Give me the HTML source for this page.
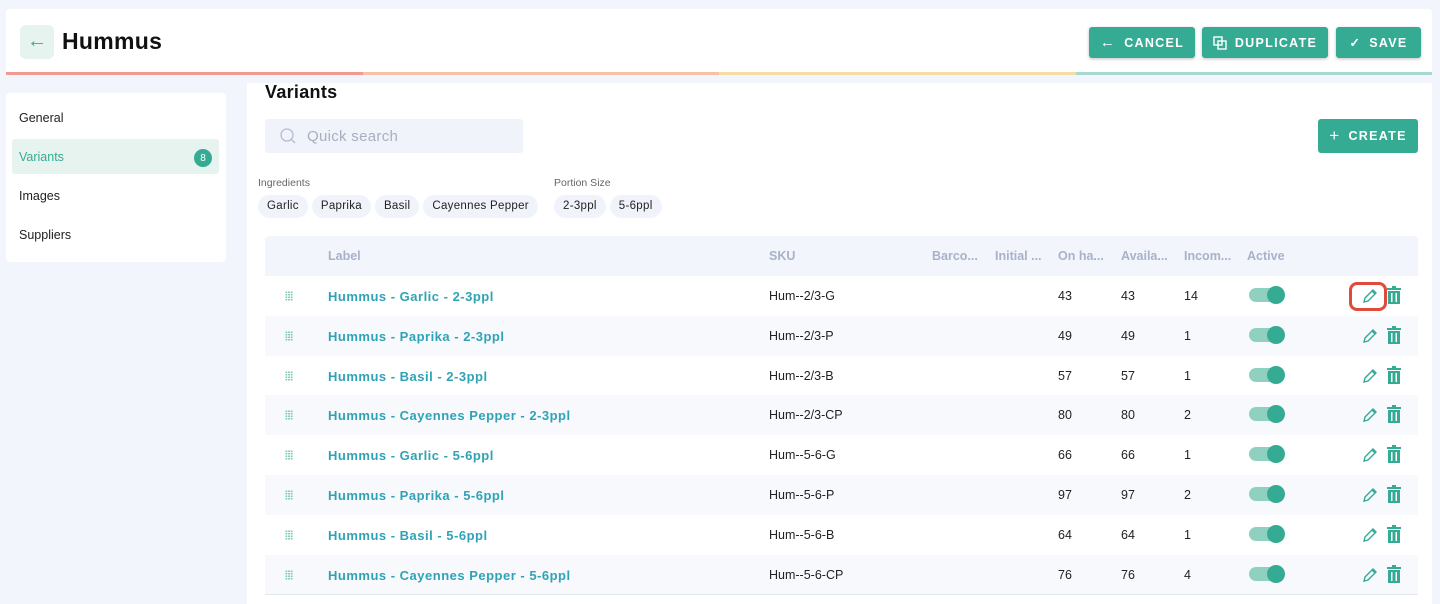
<!DOCTYPE html>
<html><head><style>
*{box-sizing:border-box;margin:0;padding:0}
body{width:1440px;height:604px;overflow:hidden;background:#f2f5fc;font-family:"Liberation Sans",sans-serif;color:#222;position:relative}
.abs{position:absolute}
.hdr{left:6px;top:9px;width:1426px;height:66px;background:#fff;border-radius:4px 4px 0 0}
.grad{left:6px;top:72px;width:1426px;height:3px;display:flex}
.grad div{flex:1}
.back{left:20px;top:25px;width:34px;height:34px;background:#e6f3ef;border-radius:6px;color:#35a993;font-size:20px;text-align:center;line-height:32px}
.title{left:62px;top:28px;font-size:23px;font-weight:bold;color:#111;letter-spacing:.3px}
.btn{top:27px;height:31px;background:#36ab94;color:#fff;font-weight:bold;font-size:12.5px;letter-spacing:1.3px;border-radius:3px;box-shadow:0 1px 3px rgba(0,0,0,.25);display:flex;align-items:center;justify-content:center;gap:8px}
.side{left:6px;top:93px;width:220px;height:169px;background:#fff;border-radius:4px}
.si{position:absolute;left:13px;font-size:12.5px;color:#222}
.main{left:247px;top:83px;width:1185px;height:521px;background:#fff}
.chip{display:inline-block;background:#f0f3fa;border-radius:12px;padding:0 9px;height:23px;line-height:23px;font-size:11.5px;margin-right:4px;color:#222;letter-spacing:.3px}
.row{position:absolute;left:265px;width:1153px;height:40px;font-size:12.5px}
.row span{position:absolute;top:13px}
.lbl{left:63px;color:#2fa3b5;font-weight:bold;font-size:13px;letter-spacing:.5px}
.drag{left:20px;top:15px!important;width:8px;height:10px;background-image:radial-gradient(#7cc8b4 45%,transparent 50%);background-size:2.7px 2.5px}
.tog{position:absolute;left:984px;top:12px;width:34px;height:14px;background:#8fd0c1;border-radius:7px}
.tog:after{content:"";position:absolute;right:-2px;top:-2px;width:18px;height:18px;border-radius:50%;background:#36ab94}
</style></head><body>
<div class="abs hdr"></div>
<div class="abs grad"><div style="background:#f19a92"></div><div style="background:#f6c2a6"></div><div style="background:#f4dda6"></div><div style="background:#a8d9cf"></div></div>
<div class="abs back">&#8592;</div>
<div class="abs title">Hummus</div>
<div class="abs btn" style="left:1089px;width:106px"><span style="font-size:15px">&#8592;</span>CANCEL</div>
<div class="abs btn" style="left:1202px;width:126px"><svg width="14" height="14" viewBox="0 0 14 14" fill="none" stroke="#fff" stroke-width="1.4"><rect x="1" y="1" width="8" height="8"/><rect x="5" y="5" width="8" height="8"/></svg>DUPLICATE</div>
<div class="abs btn" style="left:1336px;width:85px"><span>&#10003;</span>SAVE</div>
<div class="abs side">
<div class="si" style="top:18px">General</div>
<div style="position:absolute;left:6px;top:46px;width:207px;height:35px;background:#e6f3ef;border-radius:3px"></div>
<div class="si" style="top:57px;color:#36ab94">Variants</div>
<div style="position:absolute;left:188px;top:56px;width:18px;height:18px;border-radius:50%;background:#36ab94;color:#fff;font-size:10px;text-align:center;line-height:19px">8</div>
<div class="si" style="top:96px">Images</div>
<div class="si" style="top:135px">Suppliers</div>
</div>
<div class="abs main"></div>
<div class="abs" style="left:265px;top:82px;font-size:18px;font-weight:bold;color:#111;letter-spacing:.3px">Variants</div>
<div class="abs" style="left:265px;top:119px;width:258px;height:34px;background:#f0f3fa;border-radius:3px"></div>
<svg class="abs" style="left:279px;top:127px" width="18" height="18" viewBox="0 0 18 18" fill="none" stroke="#b4bdd0" stroke-width="1.3"><circle cx="8" cy="8" r="6"/><path d="M12.5 12.5L16 16"/></svg>
<div class="abs" style="left:307px;top:128px;font-size:15px;color:#a7afc0;letter-spacing:.3px">Quick search</div>
<div class="abs btn" style="left:1318px;top:119px;width:100px;height:34px;box-shadow:none"><span style="font-size:17px;font-weight:normal">+</span>CREATE</div>
<div class="abs" style="left:258px;top:177px;font-size:10.5px;color:#666">Ingredients</div>
<div class="abs" style="left:554px;top:177px;font-size:10.5px;color:#666">Portion Size</div>
<div class="abs" style="left:258px;top:195px"><span class="chip">Garlic</span><span class="chip">Paprika</span><span class="chip">Basil</span><span class="chip">Cayennes Pepper</span></div>
<div class="abs" style="left:554px;top:195px"><span class="chip">2-3ppl</span><span class="chip">5-6ppl</span></div>
<div class="row" style="top:236px;background:#f2f5fc;border-radius:4px 4px 0 0;color:#a8b2c8;font-weight:bold">
<span style="left:63px">Label</span><span style="left:504px">SKU</span><span style="left:667px">Barco...</span><span style="left:730px">Initial ...</span><span style="left:793px">On ha...</span><span style="left:856px">Availa...</span><span style="left:919px">Incom...</span><span style="left:982px">Active</span></div>
<div id="rows"></div>
<div class="abs" style="left:265px;top:594px;width:1153px;height:1px;background:#e3e8f0"></div>
<div class="abs" style="left:1349px;top:282px;width:38px;height:29px;border:3px solid #e04a3a;border-radius:8px"></div>
<script>
var d=[["Hummus - Garlic - 2-3ppl","Hum--2/3-G",43,43,14],["Hummus - Paprika - 2-3ppl","Hum--2/3-P",49,49,1],["Hummus - Basil - 2-3ppl","Hum--2/3-B",57,57,1],["Hummus - Cayennes Pepper - 2-3ppl","Hum--2/3-CP",80,80,2],["Hummus - Garlic - 5-6ppl","Hum--5-6-G",66,66,1],["Hummus - Paprika - 5-6ppl","Hum--5-6-P",97,97,2],["Hummus - Basil - 5-6ppl","Hum--5-6-B",64,64,1],["Hummus - Cayennes Pepper - 5-6ppl","Hum--5-6-CP",76,76,4]];
var h="";d.forEach(function(r,i){h+='<div class="row" style="top:'+(276+i*39.8)+'px;background:'+(i%2?'#f7f9fd':'#fff')+'"><span class="drag"></span><span class="lbl">'+r[0]+'</span><span style="left:504px">'+r[1]+'</span><span style="left:793px">'+r[2]+'</span><span style="left:856px">'+r[3]+'</span><span style="left:919px">'+r[4]+'</span><div class="tog"></div>'+
'<svg style="position:absolute;left:1096px;top:11px" width="18" height="18" viewBox="0 0 18 18" fill="none" stroke="#36ab94" stroke-width="1.4"><path d="M3 15l1-4 8-8 3 3-8 8z M11 4l3 3"/></svg>'+
'<svg style="position:absolute;left:1121px;top:10px" width="16" height="19" viewBox="0 0 16 19" fill="#36ab94"><rect x="1" y="2" width="14" height="2"/><rect x="6" y="0" width="4" height="2"/><path d="M2 5h12v13H2z M5 7v9h1.5V7z M9.5 7v9H11V7z" fill-rule="evenodd"/></svg></div>'});
document.getElementById("rows").outerHTML=h;
</script>
</body></html>
